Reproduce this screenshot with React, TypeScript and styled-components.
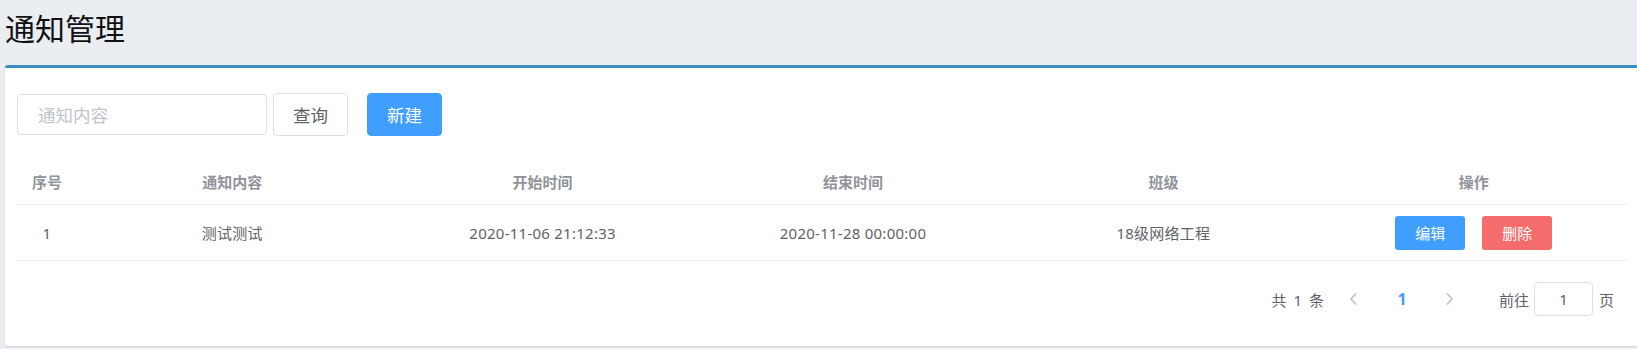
import styled, { createGlobalStyle } from 'styled-components';

const GlobalStyle = createGlobalStyle`
  html, body {
    margin: 0;
    padding: 0;
    background: #eaedf1;
    overflow: hidden;
  }
  body {
    font-family: "Noto Sans", "Noto Sans CJK SC", sans-serif;
  }
  * { box-sizing: border-box; }
`;

const Page = styled.div`
  height: 349px;
  padding-left: 5px;
`;

const Title = styled.h1`
  margin: 0 0 20px;
  padding-top: 9px;
  font-family: "Noto Sans CJK SC", sans-serif;
  font-size: 30px;
  font-weight: 400;
  line-height: 36px;
  color: #111;
`;

const Card = styled.div`
  background: #fff;
  border-top: 3px solid #3c8dbc;
  border-radius: 3px 0 0 3px;
  padding: 25px 8px 30px 12px;
  box-shadow: 0 1px 2px rgba(0, 0, 0, 0.14);
`;

const Toolbar = styled.div`
  display: flex;
  align-items: center;
  height: 43px;
`;

const SearchInput = styled.input`
  width: 250px;
  height: 41px;
  border: 1px solid #dcdfe6;
  border-radius: 4px;
  padding: 0 20px;
  font-family: "Noto Sans", "Noto Sans CJK SC", sans-serif;
  font-size: 17.5px;
  color: #606266;
  outline: none;
  &::placeholder { color: #c0c4cc; }
`;

const Button = styled.button<{ $primary?: boolean; $gap: number }>`
  width: 75px;
  height: 43px;
  margin-left: ${p => p.$gap}px;
  border-radius: 4px;
  border: 1px solid ${p => (p.$primary ? '#409eff' : '#dcdfe6')};
  background: ${p => (p.$primary ? '#409eff' : '#fff')};
  color: ${p => (p.$primary ? '#fff' : '#606266')};
  font-family: "Noto Sans", "Noto Sans CJK SC", sans-serif;
  font-size: 17.5px;
  padding: 0;
  cursor: pointer;
`;

const Table = styled.div`
  margin-top: 25px;
  width: 100%;
`;

const Row = styled.div<{ $head?: boolean }>`
  display: grid;
  grid-template-columns: 60px repeat(5, 1fr);
  align-items: center;
  height: ${p => (p.$head ? 44 : 56)}px;
  padding-bottom: ${p => (p.$head ? 3 : 0)}px;
  border-bottom: 1px solid #ebeef5;
  font-size: 15px;
  letter-spacing: ${p => (p.$head ? 0 : 0.25)}px;
  color: ${p => (p.$head ? '#909399' : '#606266')};
  font-weight: ${p => (p.$head ? 700 : 400)};
`;

const Cell = styled.div`
  text-align: center;
  display: flex;
  justify-content: center;
  align-items: center;
  gap: 17px;
`;

const SmallButton = styled.button<{ $color: string }>`
  width: 70px;
  height: 34px;
  border: none;
  border-radius: 3px;
  background: ${p => p.$color};
  color: #fff;
  font-family: "Noto Sans", "Noto Sans CJK SC", sans-serif;
  font-size: 15px;
  padding: 0;
  cursor: pointer;
`;

const Pagination = styled.div`
  margin-top: 21px;
  height: 34px;
  display: flex;
  justify-content: flex-end;
  align-items: center;
  padding-right: 15px;
  font-size: 15px;
  color: #606266;
`;

const Total = styled.span`
  margin-right: 6px;
  word-spacing: 3px;
`;

const PagerItem = styled.span<{ $active?: boolean }>`
  width: 48px;
  display: flex;
  justify-content: center;
  align-items: center;
  font-size: 16px;
  color: ${p => (p.$active ? '#409eff' : '#c0c4cc')};
  font-weight: 700;
`;

const Jumper = styled.span`
  margin-left: 25px;
  display: flex;
  align-items: center;
`;

const PageInput = styled.input`
  width: 59px;
  height: 34px;
  margin: 0 6px 0 5px;
  border: 1px solid #dcdfe6;
  border-radius: 4px;
  text-align: center;
  font-family: "Noto Sans", "Noto Sans CJK SC", sans-serif;
  font-size: 15px;
  color: #606266;
  outline: none;
`;

const Chevron = ({ dir }: { dir: 'left' | 'right' }) => (
  <svg width="9" height="14" viewBox="0 0 9 14">
    <polyline
      points={dir === 'left' ? '7,1.5 2,7 7,12.5' : '2,1.5 7,7 2,12.5'}
      fill="none"
      stroke="#c0c4cc"
      strokeWidth="1.8"
    />
  </svg>
);

const rows = [
  { id: 1, content: '测试测试', start: '2020-11-06 21:12:33', end: '2020-11-28 00:00:00', cls: '18级网络工程' },
];

export default function App() {
  return (
    <Page>
      <GlobalStyle />
      <Title>通知管理</Title>
      <Card>
        <Toolbar>
          <SearchInput placeholder="通知内容" />
          <Button $gap={6}>查询</Button>
          <Button $gap={19} $primary>新建</Button>
        </Toolbar>
        <Table>
          <Row $head>
            <Cell>序号</Cell>
            <Cell>通知内容</Cell>
            <Cell>开始时间</Cell>
            <Cell>结束时间</Cell>
            <Cell>班级</Cell>
            <Cell>操作</Cell>
          </Row>
          {rows.map(r => (
            <Row key={r.id}>
              <Cell>{r.id}</Cell>
              <Cell>{r.content}</Cell>
              <Cell>{r.start}</Cell>
              <Cell>{r.end}</Cell>
              <Cell>{r.cls}</Cell>
              <Cell>
                <SmallButton $color="#409eff">编辑</SmallButton>
                <SmallButton $color="#f56c6c">删除</SmallButton>
              </Cell>
            </Row>
          ))}
        </Table>
        <Pagination>
          <Total>共 1 条</Total>
          <PagerItem><Chevron dir="left" /></PagerItem>
          <PagerItem $active>1</PagerItem>
          <PagerItem><Chevron dir="right" /></PagerItem>
          <Jumper>
            前往
            <PageInput defaultValue="1" />
            页
          </Jumper>
        </Pagination>
      </Card>
    </Page>
  );
}
